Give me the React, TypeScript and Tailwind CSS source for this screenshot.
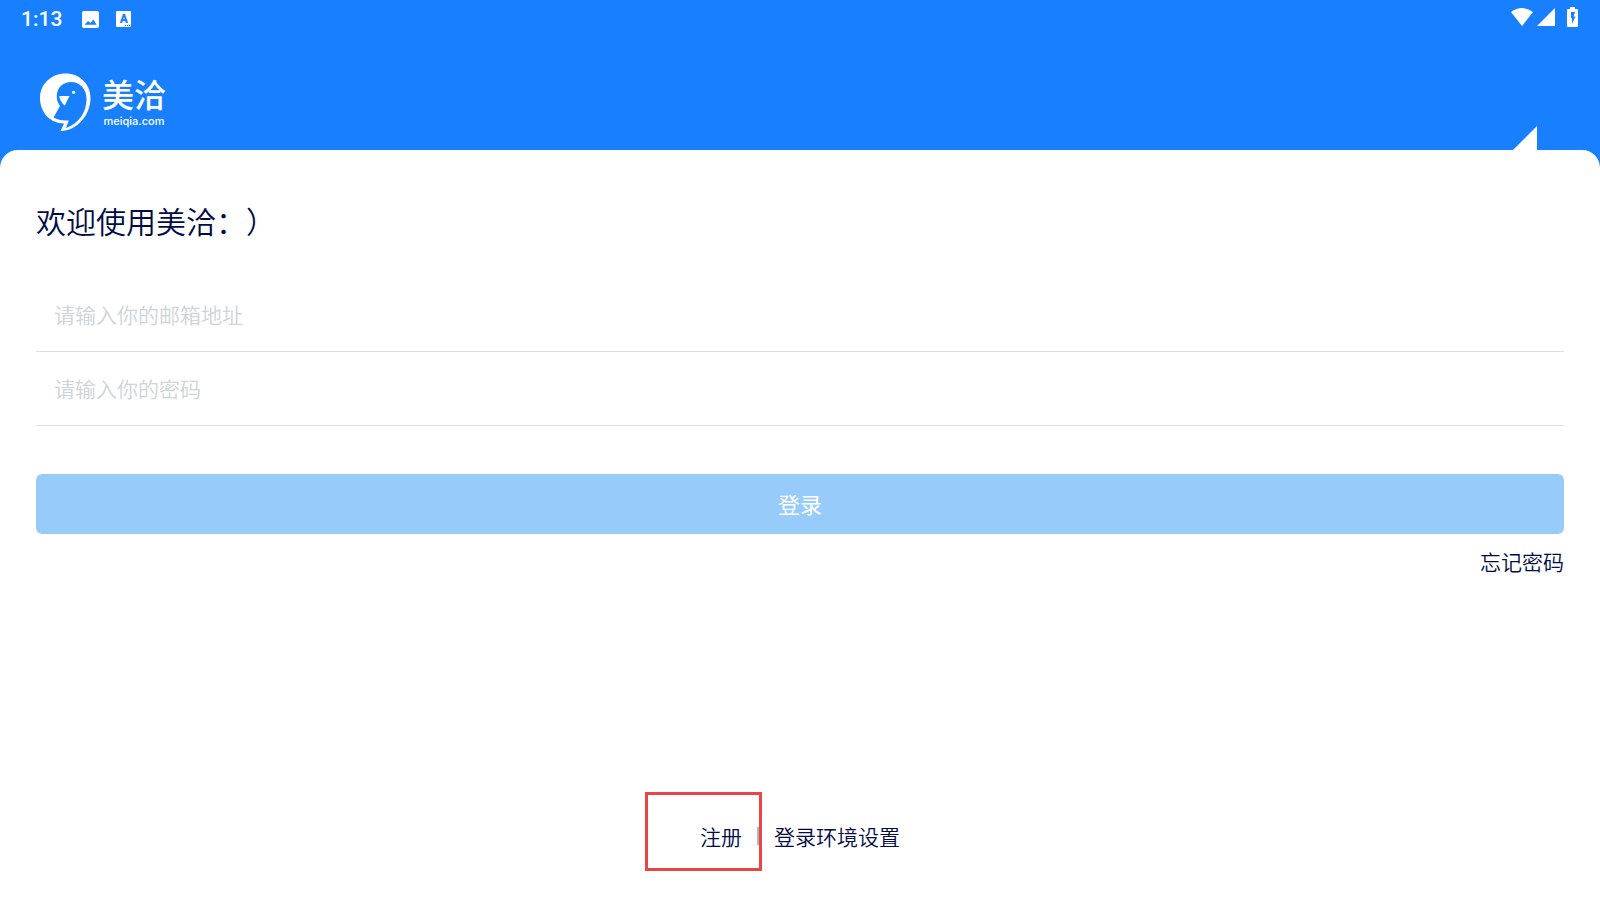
const fontCjk = "font-['Noto_Sans_CJK_SC',sans-serif]";

function StatusBar() {
  return (
    <div className="flex h-9 items-center justify-between pl-[21px] pr-[22px]">
      <div className="flex items-center pt-0.5">
        <span className="font-['Roboto',sans-serif] text-[21px] leading-6 font-medium">1:13</span>
        <svg className="ml-5 size-[17px]" viewBox="0 0 18 18" aria-hidden="true">
          <path
            fillRule="evenodd"
            fill="currentColor"
            d="M2 0h14a2 2 0 0 1 2 2v14a2 2 0 0 1-2 2H2a2 2 0 0 1-2-2V2a2 2 0 0 1 2-2ZM2.500 14.500h13L12 9 9 12.800 6.500 10.500Z"
          />
        </svg>
        <span className="relative ml-[17px] flex h-4 w-[15px] items-center justify-center rounded-[1px] bg-white font-['Roboto',sans-serif] text-[12px] leading-4 font-black text-[#187fff]">
          A
          <span className="absolute right-px bottom-px flex gap-px">
            <i className="size-px bg-[#187fff]" />
            <i className="size-px bg-[#187fff]" />
            <i className="size-px bg-[#187fff]" />
          </span>
        </span>
      </div>

      <div className="flex items-center pb-0.5">
        <svg className="h-[18px] w-[22px]" viewBox="0 0 22 18" fill="currentColor" aria-hidden="true">
          <path d="M0 4Q11-4 22 4L11 18Z" />
        </svg>
        <svg className="ml-1 size-[18px]" viewBox="0 0 18 18" fill="currentColor" aria-hidden="true">
          <path d="M18 0v18H0Z" />
        </svg>
        <svg className="ml-3 h-5 w-[11px]" viewBox="0 0 11 20" fill="currentColor" aria-hidden="true">
          <path
            fillRule="evenodd"
            d="M3 0h5v2h2a1 1 0 0 1 1 1v16a1 1 0 0 1-1 1H1a1 1 0 0 1-1-1V3a1 1 0 0 1 1-1h2ZM4 5v6h1v6L8.500 9.500H6.500L8 5Z"
          />
        </svg>
      </div>
    </div>
  );
}

function Logo() {
  return (
    <div className="flex items-start">
      <svg className="mt-0.5 h-[58px] w-[51px]" viewBox="40 73 51 58" aria-hidden="true">
        <path
          fill="#fff"
          d="M65.500 73.500C79.500 73.500 90.500 84 90.500 98C90.500 115 77 131 60.500 131L64 123.500C50 123.500 40 112 40 98C40 84 51.500 73.500 65.500 73.500Z"
        />
        <path
          fill="#187fff"
          d="M56.800 95C57.500 87 63.500 82 71 82C80 82 86.500 89 86.500 99C86.500 112 79 123.500 66 128L68.800 120.500C62 121 57.500 119.500 53.500 117.500L60 106C57.500 102.500 56.500 99 56.800 95Z"
        />
        <path fill="#fff" d="M59.300 96H69.500L64.800 105.500Q60 102 59.300 96Z" />
        <circle cx="73.600" cy="92.300" r="1.600" fill="#fff" />
      </svg>
      <div className="ml-[11px] flex flex-col items-center">
        <span className="text-[32px] leading-[44px] font-medium">美洽</span>
        <span className="font-['Inter',sans-serif] text-[11px] leading-3 font-medium">meiqia.com</span>
      </div>
    </div>
  );
}

export default function App() {
  return (
    <div className={`flex min-h-screen flex-col bg-[#187fff] text-white ${fontCjk}`}>
      <StatusBar />

      {/* Brand header */}
      <header className="relative flex h-[114px] items-start px-10 pt-[35px]">
        <Logo />
        <svg className="absolute right-[63px] bottom-0 size-6" viewBox="0 0 24 24" aria-hidden="true">
          <path fill="#fff" d="M24 0v24H0Z" />
        </svg>
      </header>

      <main className="flex grow flex-col rounded-t-[18px] bg-white px-9 pt-12 pb-12 text-[21px] leading-8 font-[350] text-[#000b46]">
        <h1 className="text-[30px] leading-[44px] font-[350] [text-spacing-trim:space-all]">欢迎使用美洽：）</h1>

        {/* Login form */}
        <form className="mt-9 flex flex-col">
          <input
            type="email"
            aria-label="邮箱地址"
            placeholder="请输入你的邮箱地址"
            className="h-[74px] border-b border-[#dedfe0] px-[18px] pb-0.5 outline-none placeholder:text-[#ced4d8]"
          />
          <input
            type="password"
            aria-label="密码"
            placeholder="请输入你的密码"
            className="h-[74px] border-b border-[#dedfe0] px-[18px] pb-0.5 outline-none placeholder:text-[#ced4d8]"
          />
          <button type="submit" className="mt-12 h-[60px] rounded-md bg-[#97ccfa] pb-0.5 text-[22px] font-normal text-white">
            登录
          </button>
          <a href="#forgot" className="mt-[11px] self-end">忘记密码</a>
        </form>

        {/* Bottom links */}
        <nav className="mt-auto flex items-center justify-center gap-[15px]">
          <a href="#register" className="relative">
            注册
            <span className="absolute -top-7 -right-5 h-[79px] w-[117px] border-3 border-[#e84545]" />
          </a>
          <span className="h-[18px] w-0.5 bg-[#b5b5bd]" />
          <a href="#settings">登录环境设置</a>
        </nav>
      </main>
    </div>
  );
}
